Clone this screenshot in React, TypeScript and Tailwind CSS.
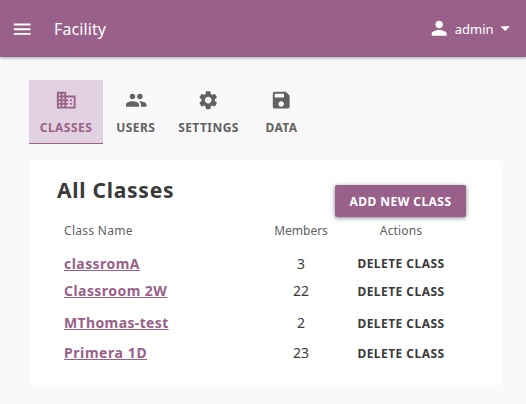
import type { ReactNode } from "react";
import {
  MdArrowDropDown,
  MdBusiness,
  MdMenu,
  MdPeople,
  MdPerson,
  MdSave,
  MdSettings,
} from "react-icons/md";

interface TabProps {
  label: string;
  icon: ReactNode;
  width: string;
  active?: boolean;
}

const classes = [
  { name: "classromA", members: 3, height: "h-[26px]", tracking: "tracking-[0.45px]", actionPad: "" },
  { name: "Classroom 2W", members: 22, height: "h-[27px]", tracking: "tracking-[0.45px]", actionPad: "pt-px" },
  { name: "MThomas-test", members: 2, height: "h-[32px]", tracking: "tracking-[0.37px]", actionPad: "pt-px" },
  { name: "Primera 1D", members: 23, height: "h-[30px]", tracking: "tracking-[0.58px]", actionPad: "pt-px" },
];

function Tab({ label, icon, width, active = false }: TabProps) {
  return (
    <a
      className={`flex h-16 flex-col items-center border-b pt-[9px] ${width} ${
        active
          ? "border-[#996189] bg-[#e2d1e0] text-[#996189]"
          : "border-transparent text-[#616161]"
      }`}
    >
      {icon}
      <span className="mt-[8px] text-[12px] leading-[18px] font-bold tracking-[0.45px] whitespace-nowrap">
        {label}
      </span>
    </a>
  );
}

export default function App() {
  return (
    <div className="h-[404px] w-[526px] overflow-hidden bg-[#f9f9f9] font-['Noto_Sans',sans-serif] text-[#3a3a3a]">
      <header className="flex h-[57px] items-center bg-[#996189] pl-[11px] text-white shadow-[0_1px_3px_rgba(0,0,0,0.35)]">
        <MdMenu className="mt-[2px] size-[22.4px]" />
        <h1 className="ml-[20.6px] text-[16px] leading-6 tracking-[0.1px]">Facility</h1>
        <button className="mr-[10px] ml-auto flex items-center">
          <MdPerson className="size-[22.4px]" />
          <span className="ml-[4.6px] pt-px text-[13px] leading-5">admin</span>
          <MdArrowDropDown className="size-[22.4px]" />
        </button>
      </header>

      <nav className="mt-[23px] ml-[29px] flex">
        <Tab active label="CLASSES" width="w-[74px]" icon={<MdBusiness className="size-[22.4px]" />} />
        <Tab label="USERS" width="w-[65.5px]" icon={<MdPeople className="size-[22.4px]" />} />
        <Tab label="SETTINGS" width="w-[80px]" icon={<MdSettings className="size-[22.4px]" />} />
        <Tab label="DATA" width="w-[66px]" icon={<MdSave className="size-[22.4px]" />} />
      </nav>

      <main className="mt-4 ml-[29px] h-[225px] w-[472px] rounded-[3px] bg-white pr-[35px] pl-[28px]">
        <div className="flex h-[57px] items-start justify-between">
          <h2 className="pt-4 text-[21px] leading-7 font-bold tracking-[0.75px]">All Classes</h2>
          <button className="mt-[25px] h-8 w-[131px] rounded-[2px] bg-[#996189] pt-px text-[12px] font-bold tracking-[0.45px] whitespace-nowrap text-white shadow-[0_1px_4px_rgba(0,0,0,0.5)]">
            ADD NEW CLASS
          </button>
        </div>
        <div className="grid h-[33px] grid-cols-[190px_94px_106px] pt-[5px] pl-[7px] text-[12px] leading-[18px] text-[#616161]">
          <span className="tracking-[0.3px]">Class Name</span>
          <span className="text-center">Members</span>
          <span className="text-center tracking-[0.15px]">Actions</span>
        </div>
        {classes.map((item) => (
          <div
            key={item.name}
            className={`grid grid-cols-[190px_94px_106px] items-end pl-[7px] ${item.height}`}
          >
            <a
              className={`text-[14px] leading-6 font-bold whitespace-nowrap text-[#996189] underline ${item.tracking}`}
            >
              {item.name}
            </a>
            <span className="text-center text-[14px] leading-6">{item.members}</span>
            <button
              className={`h-6 text-center text-[12px] leading-6 font-bold tracking-[0.45px] whitespace-nowrap ${item.actionPad}`}
            >
              DELETE CLASS
            </button>
          </div>
        ))}
      </main>
    </div>
  );
}
